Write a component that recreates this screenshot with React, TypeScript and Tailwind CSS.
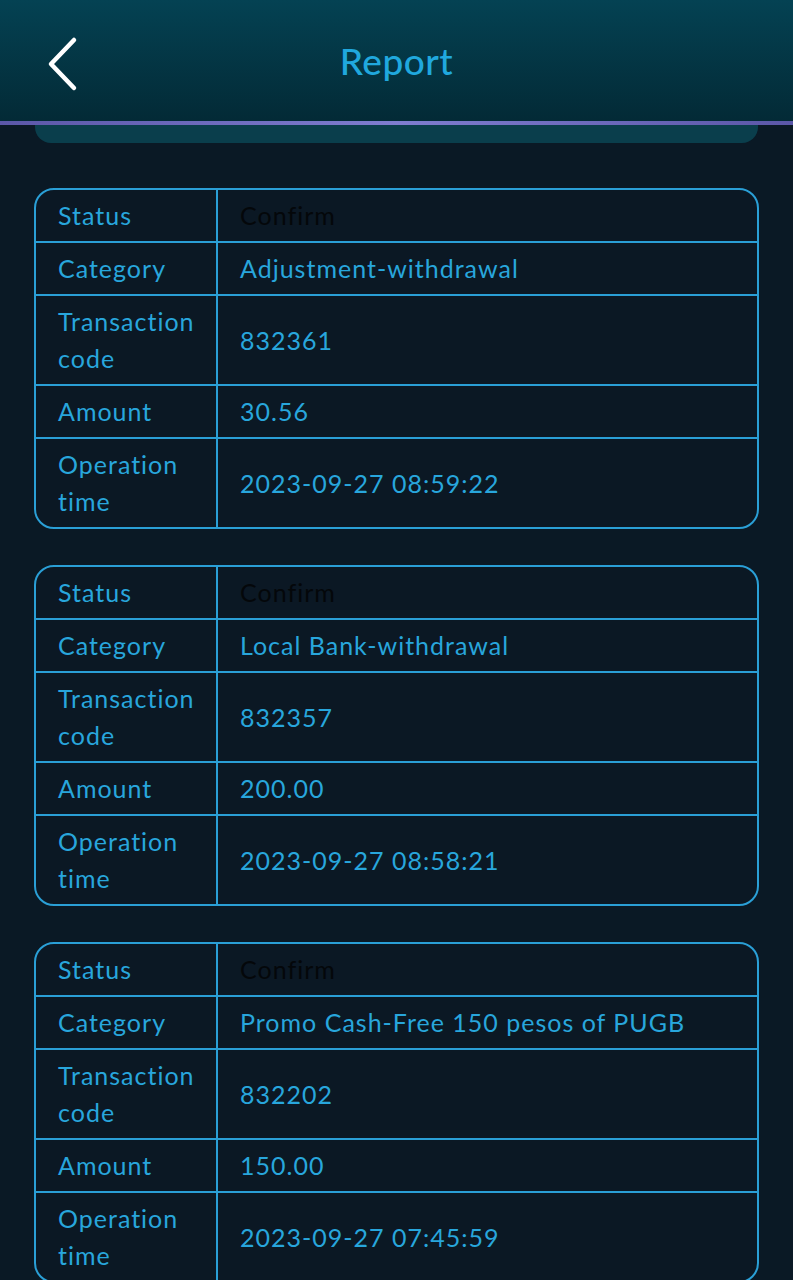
const RECORDS = [
  {
    category: 'Adjustment-withdrawal',
    code: '832361',
    amount: '30.56',
    time: '2023-09-27 08:59:22',
  },
  {
    category: 'Local Bank-withdrawal',
    code: '832357',
    amount: '200.00',
    time: '2023-09-27 08:58:21',
  },
  {
    category: 'Promo Cash-Free 150 pesos of PUGB',
    code: '832202',
    amount: '150.00',
    time: '2023-09-27 07:45:59',
  },
];

type Rec = (typeof RECORDS)[number];

function Row({ label, value, dark, first }: { label: string; value: string; dark?: boolean; first?: boolean }) {
  return (
    <div className={`grid grid-cols-[182px_1fr] ${first ? '' : 'border-t-2 border-[#2a9fd6]'}`}>
      <div className="border-r-2 border-[#2a9fd6] py-[7px] pl-[22px] pr-2 text-[#28a6dc]">{label}</div>
      <div className={`flex items-center py-[7px] pl-[22px] pr-3 ${dark ? 'text-[#04070a]' : 'text-[#28a6dc]'}`}>
        {value}
      </div>
    </div>
  );
}

function RecordTable({ rec }: { rec: Rec }) {
  return (
    <div className="overflow-hidden rounded-[20px] border-2 border-[#2a9fd6] bg-[#0b1824]">
      <Row first label="Status" value="Confirm" dark />
      <Row label="Category" value={rec.category} />
      <Row label="Transaction code" value={rec.code} />
      <Row label="Amount" value={rec.amount} />
      <Row label="Operation time" value={rec.time} />
    </div>
  );
}

export default function App() {
  return (
    <div
      className="relative min-h-[1280px] overflow-hidden bg-[#0a1925] text-[25px] leading-[37px] tracking-[1px]"
      style={{ fontFamily: 'Lato, "Open Sans", sans-serif' }}
    >
      <header className="relative flex h-[121px] items-center justify-center bg-gradient-to-b from-[#044253] to-[#032a36]">
        <button className="absolute left-[44px] top-[36px]" aria-label="Back">
          <svg width="36" height="56" viewBox="0 0 36 56" fill="none">
            <path d="M30 4 L7 28 L30 52" stroke="#ffffff" strokeWidth="4.5" strokeLinecap="round" strokeLinejoin="round" />
          </svg>
        </button>
        <h1 className="text-[37px] font-medium tracking-[0.5px] text-[#20a8de]">Report</h1>
      </header>
      <div className="h-[4px] bg-gradient-to-r from-[#5b57a8] via-[#7f7dd0] to-[#5b57a8]" />
      <div className="mx-[35px] h-[18px] rounded-b-[16px] bg-[#0a3e4c]" />

      <div className="flex flex-col gap-[36px] px-[34px] pt-[45px]">
        {RECORDS.map((rec) => (
          <RecordTable key={rec.code} rec={rec} />
        ))}
      </div>
    </div>
  );
}
